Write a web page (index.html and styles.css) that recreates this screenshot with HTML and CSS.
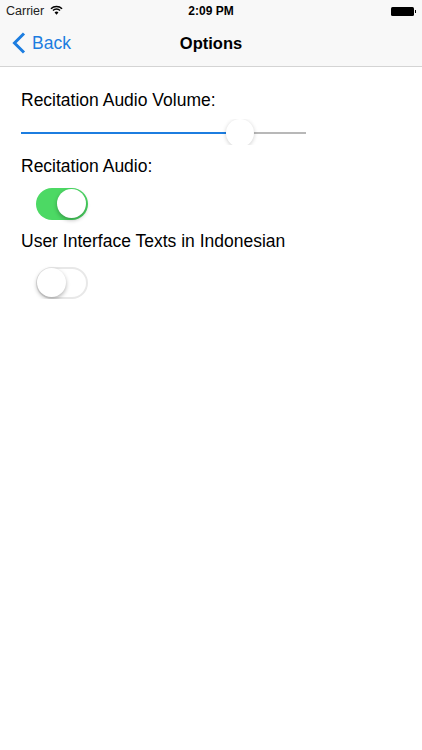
FILE: index.html
```html
<!DOCTYPE html>
<html lang="en">
<head>
  <meta charset="UTF-8">
  <meta name="viewport" content="width=device-width, initial-scale=1.0">
  <title>Options</title>
  <link rel="stylesheet" href="styles.css">
</head>
<body>
  <header class="top-bar">
    <div class="status-bar">
      <div class="status-left">
        <span>Carrier</span>
        <svg class="wifi" width="13" height="10" viewBox="0 0 14 10">
          <path d="M1 3.6A8.6 8.6 0 0 1 13 3.6" fill="none" stroke="#000" stroke-width="1.6"/>
          <path d="M3.2 5.6A5.4 5.4 0 0 1 10.8 5.6" fill="none" stroke="#000" stroke-width="1.6"/>
          <path d="M7 10L4.9 7.6A3 3 0 0 1 9.1 7.6Z" fill="#000"/>
        </svg>
      </div>
      <div class="status-time">2:09 PM</div>
      <div class="status-right">
        <div class="battery"></div>
        <div class="battery-tip"></div>
      </div>
    </div>
    <nav class="nav-bar">
      <a class="back">
        <svg width="14" height="22" viewBox="0 0 14 22">
          <path d="M12 1.5L2.5 11L12 20.5" fill="none" stroke="#1c7de0" stroke-width="3"/>
        </svg>
        <span>Back</span>
      </a>
      <div class="nav-title">Options</div>
    </nav>
  </header>

  <main class="options">
    <div class="label">Recitation Audio Volume:</div>
    <div class="slider">
      <div class="slider-fill"></div>
      <div class="slider-rest"></div>
      <div class="slider-thumb"></div>
    </div>

    <div class="label label-audio">Recitation Audio:</div>
    <div class="switch switch-on"><div class="knob"></div></div>

    <div class="label label-ui">User Interface Texts in Indonesian</div>
    <div class="switch switch-off"><div class="knob"></div></div>
  </main>
</body>
</html>
```

FILE: styles.css
```css
body {
  margin: 0;
  background: #fff;
  color: #000;
  font-family: 'Liberation Sans', Arial, sans-serif;
}

.top-bar {
  height: 66px;
  background: #f8f8f8;
  border-bottom: 1px solid #d4d4d4;
}

.status-bar {
  height: 22px;
  display: grid;
  grid-template-columns: 1fr auto 1fr;
  align-items: center;
  padding: 0 6px;
  font-size: 12.5px;
}

.status-left {
  display: flex;
  align-items: center;
  gap: 6px;
  color: #222;
}

.wifi {
  margin-top: -3px;
}

.status-time {
  font-weight: bold;
  font-size: 12px;
}

.status-right {
  display: flex;
  justify-content: flex-end;
  align-items: center;
}

.battery {
  width: 23px;
  height: 9px;
  background: #000;
  border-radius: 1.5px;
}

.battery-tip {
  width: 1.5px;
  height: 3px;
  background: #000;
  margin-left: 1px;
}

.nav-bar {
  height: 44px;
  position: relative;
  display: flex;
  align-items: center;
  justify-content: center;
}

.back {
  position: absolute;
  left: 12px;
  top: 10px;
  display: flex;
  align-items: center;
  gap: 6px;
  color: #1c7de0;
  font-size: 17.5px;
}

.nav-title {
  font-size: 16.5px;
  font-weight: bold;
  margin-bottom: 2px;
}

.options {
  padding: 0 21px;
}

.label {
  font-size: 17.5px;
  line-height: 20px;
}

.options .label:first-child {
  margin-top: 23px;
}

.slider {
  position: relative;
  width: 285px;
  height: 26px;
  box-sizing: border-box;
  padding-top: 2px;
  margin-top: 9px;
  display: flex;
  align-items: center;
  overflow: hidden;
}

.slider-fill {
  width: 205px;
  height: 2px;
  background: #1c7de0;
}

.slider-rest {
  flex: 1;
  height: 2px;
  background: #b8b8b8;
}

.slider-thumb {
  position: absolute;
  left: 205px;
  top: 0;
  width: 28px;
  height: 28px;
  background: #fff;
  border-radius: 50%;
  box-shadow: 0 1px 4px rgba(0,0,0,0.2);
}

.label-audio {
  margin-top: 11px;
}

.label-ui {
  margin-top: 11px;
}

.switch {
  position: relative;
  width: 52px;
  height: 32px;
  box-sizing: border-box;
  margin-left: 15px;
  border-radius: 16px;
}

.switch-on {
  margin-top: 12px;
  background: #4cd964;
}

.switch-off {
  margin-top: 16px;
  background: #fff;
  border: 2px solid #e8e8e8;
}

.knob {
  position: absolute;
  width: 29px;
  height: 29px;
  background: #fff;
  border-radius: 50%;
  box-shadow: 0 2px 4px rgba(0,0,0,0.3);
}

.switch-on .knob {
  right: 2px;
  top: 1px;
}

.switch-off .knob {
  left: -1px;
  top: -1px;
}
```
